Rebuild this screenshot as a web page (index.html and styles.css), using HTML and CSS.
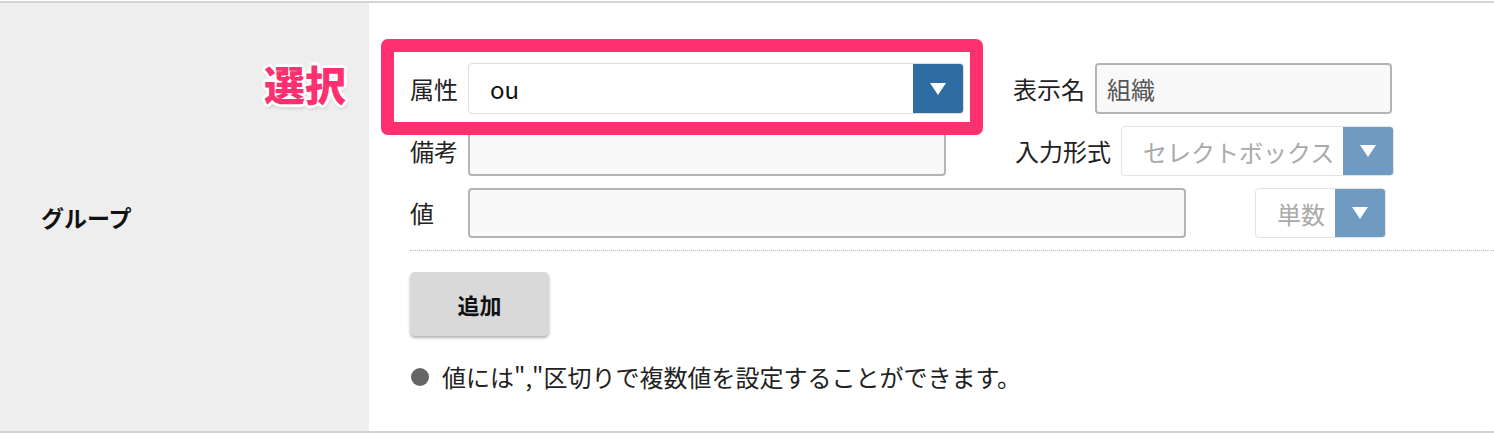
FILE: index.html
```html
<!DOCTYPE html>
<html lang="ja">
<head>
  <meta charset="UTF-8" />
  <title>属性設定</title>
  <link rel="stylesheet" href="styles.css">
</head>
<body>

  <!-- Attribute form row -->
  <div class="form-table">
    <div class="form-row">
      <div class="row-head">グループ</div>

      <div class="row-body">
        <!-- 属性 / 表示名 -->
        <div class="field-line field-line--first">
          <span class="field-label">属性</span>
          <div class="select select--active select--attr">
            <span class="select-value">ou</span>
            <span class="select-arrow"></span>
          </div>
          <div class="field-side field-side--near">
            <span class="side-label">表示名</span>
            <input class="text-input text-input--name" type="text" value="組織">
          </div>
        </div>

        <!-- 備考 / 入力形式 -->
        <div class="field-line">
          <span class="field-label">備考</span>
          <input class="text-input text-input--memo" type="text">
          <div class="field-side">
            <span class="side-label">入力形式</span>
            <div class="select select--type">
              <span class="select-value">セレクトボックス</span>
              <span class="select-arrow"></span>
            </div>
          </div>
        </div>

        <!-- 値 / 単数 -->
        <div class="field-line">
          <span class="field-label">値</span>
          <input class="text-input text-input--value" type="text">
          <div class="field-side">
            <div class="select select--count">
              <span class="select-value">単数</span>
              <span class="select-arrow"></span>
            </div>
          </div>
        </div>

        <hr class="divider">

        <button class="add-button">追加</button>

        <p class="note"><span class="bullet"></span>値には","区切りで複数値を設定することができます。</p>
      </div>

      <!-- Annotation overlay -->
      <div class="callout-box"></div>
      <div class="callout-label">選択</div>
    </div>
  </div>

</body>
</html>
```

FILE: styles.css
```css
* {
  box-sizing: border-box;
}

body {
  margin: 0;
  background: #fff;
  color: #222;
  font-family: "Noto Sans CJK JP", "Noto Sans", sans-serif;
  font-size: 24px;
}

.form-table {
  margin-top: 1px;
  border-top: 2px solid #d4d4d4;
  border-bottom: 2px solid #d4d4d4;
}

.form-row {
  position: relative;
  display: flex;
  height: 428px;
}

.row-head {
  width: 369px;
  flex-shrink: 0;
  background: #eeeeee;
  padding-left: 41px;
  display: flex;
  align-items: center;
  font-size: 23px;
  font-weight: 700;
  color: #111;
}

.row-body {
  flex: 1;
  padding: 60px 0 0 41px;
}

/* Field rows */
.field-line {
  display: flex;
  align-items: center;
  height: 50px;
  margin-bottom: 12px;
}

.field-line--first {
  height: 51px;
}

.field-label {
  width: 58px;
  flex-shrink: 0;
  line-height: 1;
}

.field-side {
  display: flex;
  align-items: center;
  gap: 10px;
  margin-left: 69px;
}

.field-side--near {
  margin-left: 49px;
}

.side-label {
  line-height: 1;
}

.text-input {
  height: 100%;
  border: 2px solid #b4b4b4;
  border-radius: 4px;
  background: #f9f9f9;
  font-family: inherit;
  font-size: 24px;
  color: #555;
  padding: 0 10px;
  outline: none;
}

.field-side .text-input {
  height: 51px;
}

.text-input--name {
  width: 297px;
}

.text-input--memo {
  width: 478px;
}

.text-input--value {
  width: 718px;
}

/* Select boxes */
.select {
  display: flex;
  align-items: center;
  height: 50px;
  border: 1px solid #e3e3e3;
  border-radius: 4px;
  background: #fff;
  overflow: hidden;
}

.select-value {
  flex: 1;
  padding-left: 21px;
  white-space: nowrap;
  overflow: hidden;
  color: #aaa;
}

.select--active .select-value {
  color: #111;
}

.select-arrow {
  width: 50px;
  height: 100%;
  flex-shrink: 0;
  background: #6f9bc3;
  display: flex;
  align-items: center;
  justify-content: center;
}

.select-arrow::before {
  content: "";
  border-left: 8px solid transparent;
  border-right: 8px solid transparent;
  border-top: 12px solid #fff;
}

.select--active .select-arrow {
  background: #2e6ca2;
}

.select--attr {
  width: 496px;
  height: 51px;
  border-color: #dedede;
}

.select--type {
  width: 273px;
}

.select--count {
  width: 131px;
}

.divider {
  margin: 11px 0 0 0;
  border: none;
  border-top: 1px dotted #bbb;
}

.add-button {
  display: block;
  margin-top: 21px;
  width: 139px;
  height: 64px;
  border: none;
  border-radius: 5px;
  background: #d9d9d9;
  box-shadow: 0 2px 3px rgba(0,0,0,0.3);
  font-family: inherit;
  font-size: 22px;
  font-weight: 700;
  color: #111;
  cursor: pointer;
}

.note {
  margin: 26px 0 0 0;
  line-height: 30px;
  display: flex;
  align-items: center;
  color: #222;
}

.bullet {
  width: 18px;
  height: 18px;
  border-radius: 50%;
  background: #666;
  margin: 0 13px 0 1px;
}

/* Annotation */
.callout-box {
  position: absolute;
  left: 381px;
  top: 36px;
  width: 602px;
  height: 96px;
  border: 13px solid #ff3070;
  border-radius: 7px;
}

.callout-label {
  position: absolute;
  left: 264px;
  top: 58px;
  font-size: 41px;
  font-weight: 900;
  line-height: 1.1;
  color: #ff3070;
  text-shadow:
    3px 0 0 #fff, -3px 0 0 #fff, 0 3px 0 #fff, 0 -3px 0 #fff,
    2px 2px 0 #fff, -2px 2px 0 #fff, 2px -2px 0 #fff, -2px -2px 0 #fff,
    1px 3px 4px rgba(0,0,0,0.25);
}
```
